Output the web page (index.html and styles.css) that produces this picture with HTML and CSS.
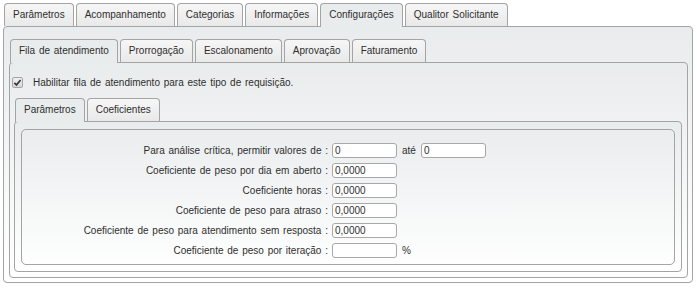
FILE: index.html
```html
<!DOCTYPE html>
<html lang="pt-BR">
<head>
  <meta charset="UTF-8" />
  <title>Configurações</title>
  <link rel="stylesheet" href="styles.css">
</head>
<body>
  <ul class="tabs">
    <li class="tab">Parâmetros</li>
    <li class="tab">Acompanhamento</li>
    <li class="tab">Categorias</li>
    <li class="tab">Informações</li>
    <li class="tab active">Configurações</li>
    <li class="tab">Qualitor Solicitante</li>
  </ul>
  <div class="panel outer">
    <ul class="tabs">
      <li class="tab active">Fila de atendimento</li>
      <li class="tab">Prorrogação</li>
      <li class="tab">Escalonamento</li>
      <li class="tab">Aprovação</li>
      <li class="tab">Faturamento</li>
    </ul>
    <div class="panel inner">
      <label class="check">
        <span class="box">
          <svg width="9" height="9" viewBox="0 0 9 9"><path d="M1.3 4.8 L3.5 6.9 L7.6 2" fill="none" stroke="#3a3a3a" stroke-width="1.7"/></svg>
        </span>
        Habilitar fila de atendimento para este tipo de requisição.
      </label>
      <ul class="tabs">
        <li class="tab active">Parâmetros</li>
        <li class="tab">Coeficientes</li>
      </ul>
      <div class="panel third">
        <div class="fields">
          <span class="lbl">Para análise crítica, permitir valores de :</span>
          <span class="val"><span class="input">0</span> até <span class="input">0</span></span>
          <span class="lbl">Coeficiente de peso por dia em aberto :</span>
          <span class="val"><span class="input">0,0000</span></span>
          <span class="lbl">Coeficiente horas :</span>
          <span class="val"><span class="input">0,0000</span></span>
          <span class="lbl">Coeficiente de peso para atraso :</span>
          <span class="val"><span class="input">0,0000</span></span>
          <span class="lbl">Coeficiente de peso para atendimento sem resposta :</span>
          <span class="val"><span class="input">0,0000</span></span>
          <span class="lbl">Coeficiente de peso por iteração :</span>
          <span class="val"><span class="input"></span> %</span>
        </div>
      </div>
    </div>
  </div>
</body>
</html>
```

FILE: styles.css
```css
* {
  box-sizing: border-box;
  margin: 0;
  padding: 0;
}
body {
  font-family: "Liberation Sans", Arial, sans-serif;
  font-size: 10px;
  word-spacing: 1px;
  color: #2e2e2e;
  background-color: #fff;
  padding: 3px 4px 4px 3px;
  height: 288px;
}
.tabs {
  display: flex;
  align-items: flex-start;
  list-style: none;
  padding-left: 1px;
  margin-bottom: -1px;
  position: relative;
  z-index: 1;
}
.tab {
  height: 23px;
  line-height: 22px;
  padding: 0 8px;
  margin-right: 2px;
  border: 1px solid #a4a4a4;
  border-bottom: none;
  border-radius: 4px 4px 0 0;
  background: linear-gradient(#f6f6f6, #e9e9e9);
  white-space: nowrap;
}
.tab.active {
  height: 24px;
  background: #e9eced;
}
.panel {
  border: 1px solid #a4a4a4;
  border-radius: 4px;
  background: linear-gradient(#e9eced, #fff);
}
.outer {
  padding: 12px 4px 4px 5px;
}
.inner {
  padding: 12px 5px 5px 4px;
}
.third {
  padding: 7px 6px 6px 6px;
}
.check {
  display: flex;
  align-items: center;
  height: 14px;
  margin: 0 0 9px -2px;
  gap: 10px;
}
.box {
  width: 11px;
  height: 11px;
  border: 1px solid #a6a6a6;
  border-radius: 2px;
  background: linear-gradient(#f0f0f0, #d8d8d8);
  display: flex;
  align-items: center;
  justify-content: center;
}
.fields {
  border: 1px solid #a4a4a4;
  border-radius: 5px;
  display: grid;
  grid-template-columns: 306px auto;
  grid-auto-rows: 20px;
  column-gap: 4px;
  align-items: center;
  padding: 10px 0 4px 0;
}
.lbl {
  text-align: right;
  white-space: nowrap;
}
.val {
  display: flex;
  align-items: center;
  gap: 5px;
}
.input {
  width: 65px;
  height: 15px;
  line-height: 13px;
  border: 1px solid #a8a8a8;
  border-radius: 3px;
  background-color: #fff;
  padding: 0 2px;
}
```
